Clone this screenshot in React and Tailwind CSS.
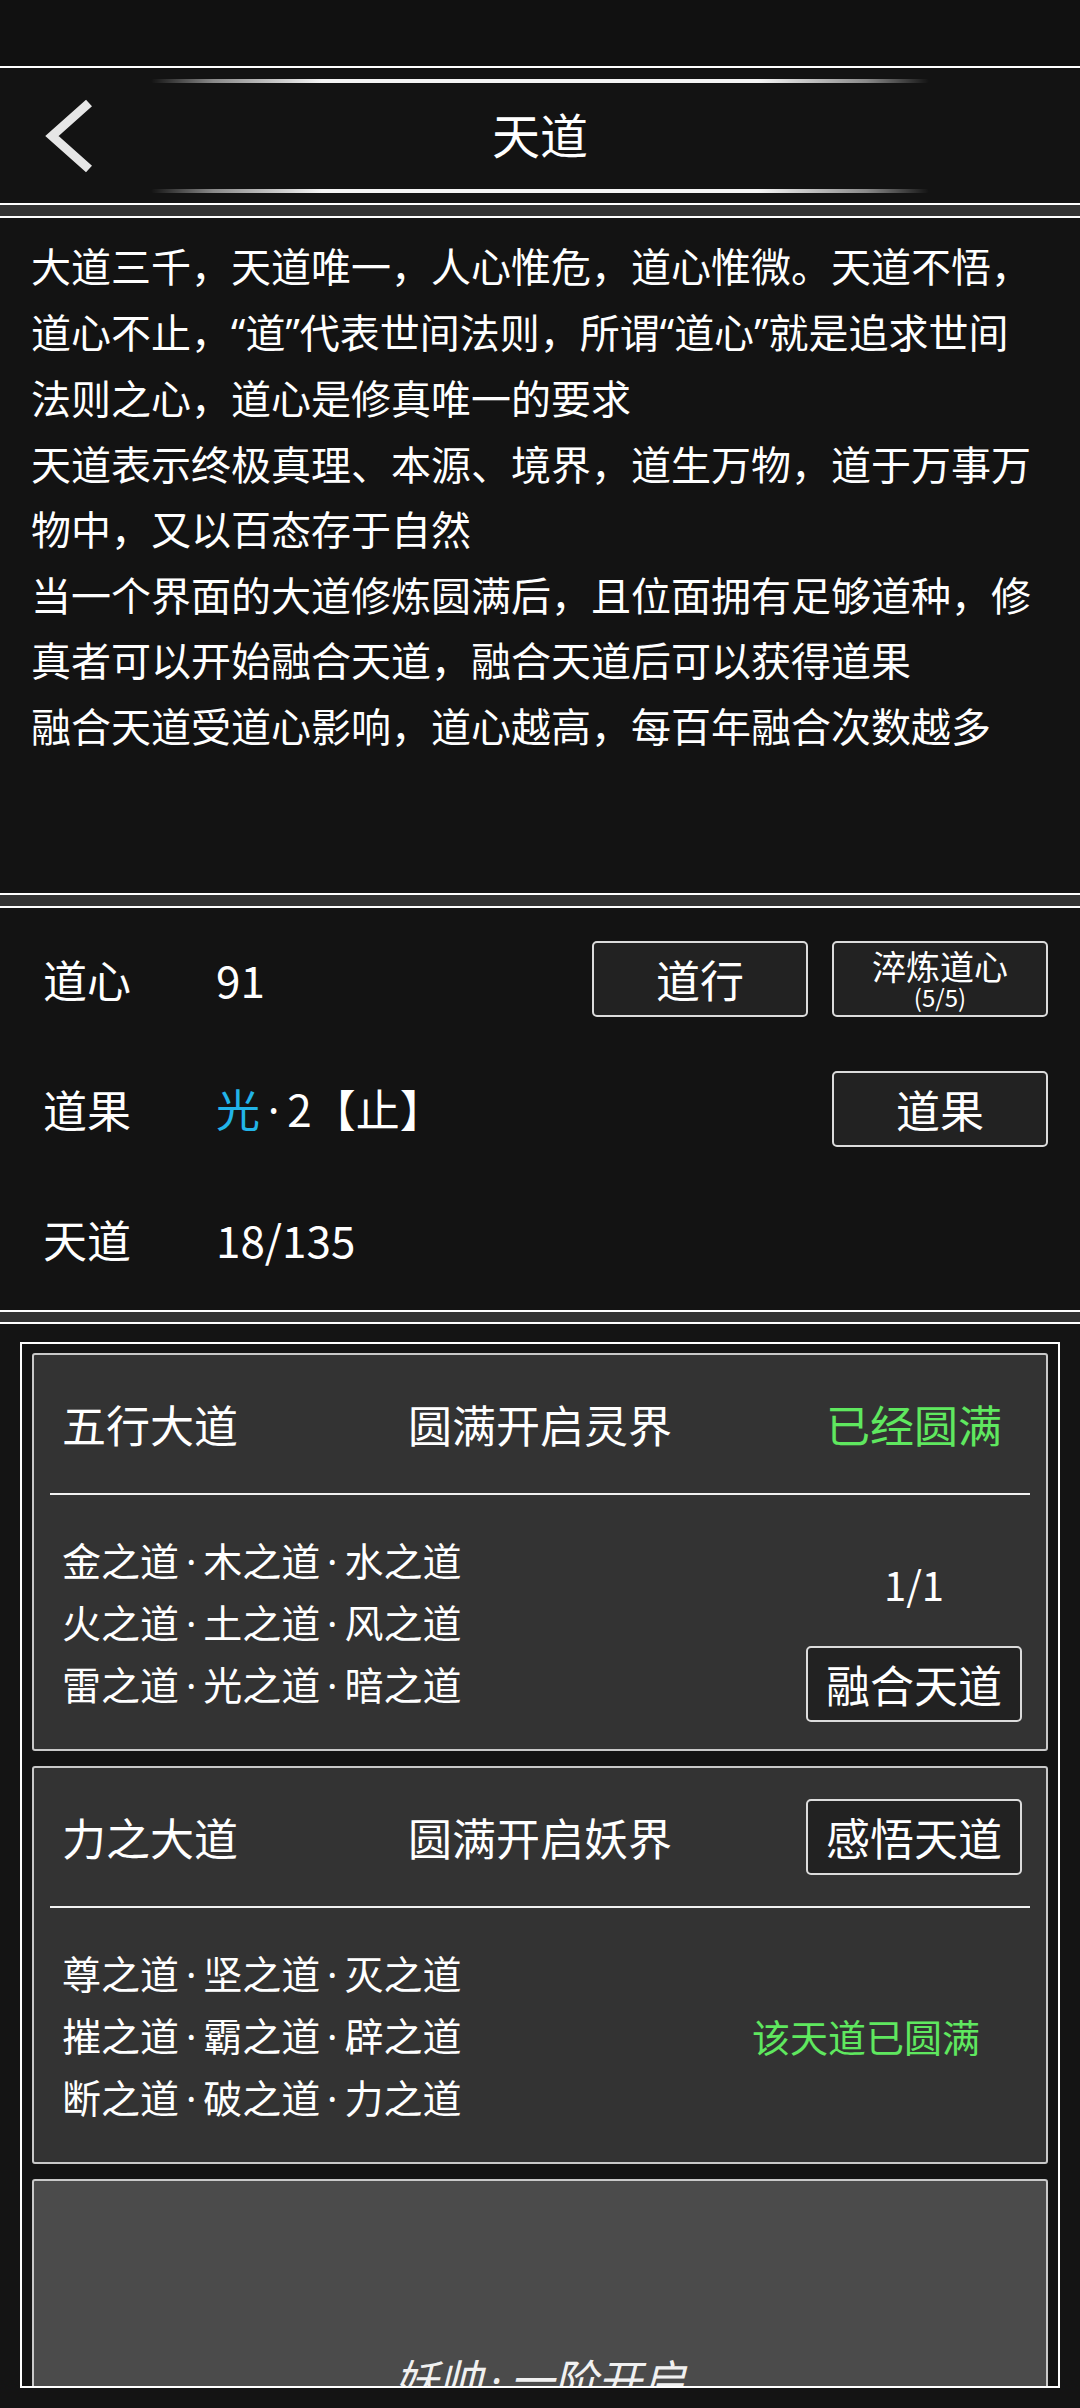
import React from 'react';

const desc = [
  '大道三千，天道唯一，人心惟危，道心惟微。天道不悟，道心不止，“道”代表世间法则，所谓“道心”就是追求世间法则之心，道心是修真唯一的要求',
  '天道表示终极真理、本源、境界，道生万物，道于万事万物中，又以百态存于自然',
  '当一个界面的大道修炼圆满后，且位面拥有足够道种，修真者可以开始融合天道，融合天道后可以获得道果',
  '融合天道受道心影响，道心越高，每百年融合次数越多',
];

// quotes and middle dots are narrow in the game font
const fmt = (str) =>
  str.split(/([“”·])/).map((part, i) => {
    if (part === '“' || part === '”')
      return (
        <span key={i} className="font-['Noto_Sans',sans-serif]">
          {part}
        </span>
      );
    if (part === '·')
      return (
        <span key={i} className="inline-block w-[0.62em] text-center font-['Noto_Sans',sans-serif]">
          ·
        </span>
      );
    return part;
  });

const Gap = ({ h }) => <div className={`bg-[#333333] ${h}`} />;

const DecoLine = () => (
  <div className="h-[4px] w-full rounded-full bg-[linear-gradient(90deg,rgba(255,255,255,0)_0%,rgba(255,255,255,0.5)_8%,#f4f4f4_22%,#f4f4f4_78%,rgba(255,255,255,0.5)_92%,rgba(255,255,255,0)_100%)]" />
);

const Btn = ({ children, className = '' }) => (
  <button
    className={`flex h-[76px] w-[216px] flex-col items-center justify-center rounded-[5px] border-2 border-[#dcdcdc] bg-[#222222] text-white ${className}`}
  >
    {children}
  </button>
);

const StatRow = ({ label, children, right }) => (
  <div className="flex h-[130px] items-center pl-[43px] pr-[32px]">
    <div className="w-[173px] text-[44px] leading-none">{label}</div>
    <div className="flex-1 text-[44px] leading-none">{children}</div>
    {right}
  </div>
);

const DaoCard = ({ title, open, right, lines, bottomRight }) => (
  <div className="overflow-hidden rounded-[3px] border-2 border-[#c9c9c9] bg-[#333333]">
    <div className="grid h-[138px] grid-cols-[1fr_auto_1fr] items-center">
      <div className="pl-[28px] text-[44px]">{title}</div>
      <div className="text-[44px]">{open}</div>
      <div className="flex justify-end pr-[24px]">{right}</div>
    </div>
    <div className="mx-[16px] h-[2px] bg-[#f2f2f2]" />
    <div className="flex h-[254px] items-stretch justify-between">
      <div className="flex flex-col justify-center pl-[28px] text-[39px] leading-[60px]">
        {lines.map((l) => (
          <div key={l} className="whitespace-nowrap">
            {fmt(l)}
          </div>
        ))}
      </div>
      {bottomRight}
    </div>
  </div>
);

export default function App() {
  return (
    <div className="w-[1080px] overflow-hidden bg-[#141414] font-['Noto_Sans_CJK_SC','Noto_Sans',sans-serif] text-white">
      {/* status bar */}
      <div className="h-[66px] bg-[#111111]" />

      {/* header */}
      <div className="grid h-[139px] grid-cols-[151px_1fr_151px] border-y-2 border-white bg-[#131313]">
        <div className="flex items-center pl-[40px]">
          <svg width="60" height="80" viewBox="0 0 60 80" fill="none">
            <polyline points="49,7 12,40 49,73" stroke="#e6e6e6" strokeWidth="9" strokeLinejoin="miter" />
          </svg>
        </div>
        <div className="flex flex-col justify-between pt-[11px] pb-[10px]">
          <DecoLine />
          <div className="pb-[6px] text-center text-[48px] leading-none">天道</div>
          <DecoLine />
        </div>
        <div />
      </div>

      <Gap h="h-[11px]" />

      {/* description */}
      <div className="h-[679px] border-y-2 border-white bg-[#131313] pl-[31px] pr-[44px] pt-[15px] text-[40px] leading-[65.5px]">
        {desc.map((p) => (
          <p key={p}>{fmt(p)}</p>
        ))}
      </div>

      <Gap h="h-[11px]" />

      {/* stats */}
      <div className="border-y-2 border-white bg-[#131313] py-[6px]">
        <StatRow
          label="道心"
          right={
            <div className="flex gap-[24px]">
              <Btn>
                <span className="text-[44px] leading-none">道行</span>
              </Btn>
              <Btn>
                <span className="text-[34px] leading-[36px]">淬炼道心</span>
                <span className="text-[24px] leading-[26px]">(5/5)</span>
              </Btn>
            </div>
          }
        >
          91
        </StatRow>
        <StatRow
          label="道果"
          right={
            <Btn>
              <span className="text-[44px] leading-none">道果</span>
            </Btn>
          }
        >
          <span className="text-[#22b4e8]">光</span>
          {fmt('·2【止】')}
        </StatRow>
        <StatRow label="天道">18/135</StatRow>
      </div>

      <Gap h="h-[10px]" />

      {/* dao list */}
      <div className="h-[1086px] border-t-2 border-white bg-[#141414] px-[20px] pt-[18px]">
        <div className="h-[1046px] overflow-hidden border-2 border-white px-[10px] pt-[9px]">
          <div className="flex flex-col gap-[15px]">
            <DaoCard
              title="五行大道"
              open="圆满开启灵界"
              right={<div className="w-[216px] text-center text-[44px] text-[#5fe85f]">已经圆满</div>}
              lines={['金之道·木之道·水之道', '火之道·土之道·风之道', '雷之道·光之道·暗之道']}
              bottomRight={
                <div className="mr-[24px] flex w-[216px] flex-col items-center justify-end pb-[27px]">
                  <div className="text-[40px] leading-[60px]">1/1</div>
                  <Btn className="mt-[32px]">
                    <span className="text-[44px] leading-none">融合天道</span>
                  </Btn>
                </div>
              }
            />
            <DaoCard
              title="力之大道"
              open="圆满开启妖界"
              right={
                <Btn>
                  <span className="text-[44px] leading-none">感悟天道</span>
                </Btn>
              }
              lines={['尊之道·坚之道·灭之道', '摧之道·霸之道·辟之道', '断之道·破之道·力之道']}
              bottomRight={
                <div className="flex items-center pr-[66px] text-[38px] text-[#5fe85f]">该天道已圆满</div>
              }
            />
            <div className="h-[320px] rounded-[3px] border-2 border-[#c9c9c9] bg-[#4b4b4b] pt-[164px] text-center text-[44px] italic leading-[66px] text-[#f0f0f0]">
              {fmt('妖帅·一阶开启')}
            </div>
          </div>
        </div>
      </div>
    </div>
  );
}
